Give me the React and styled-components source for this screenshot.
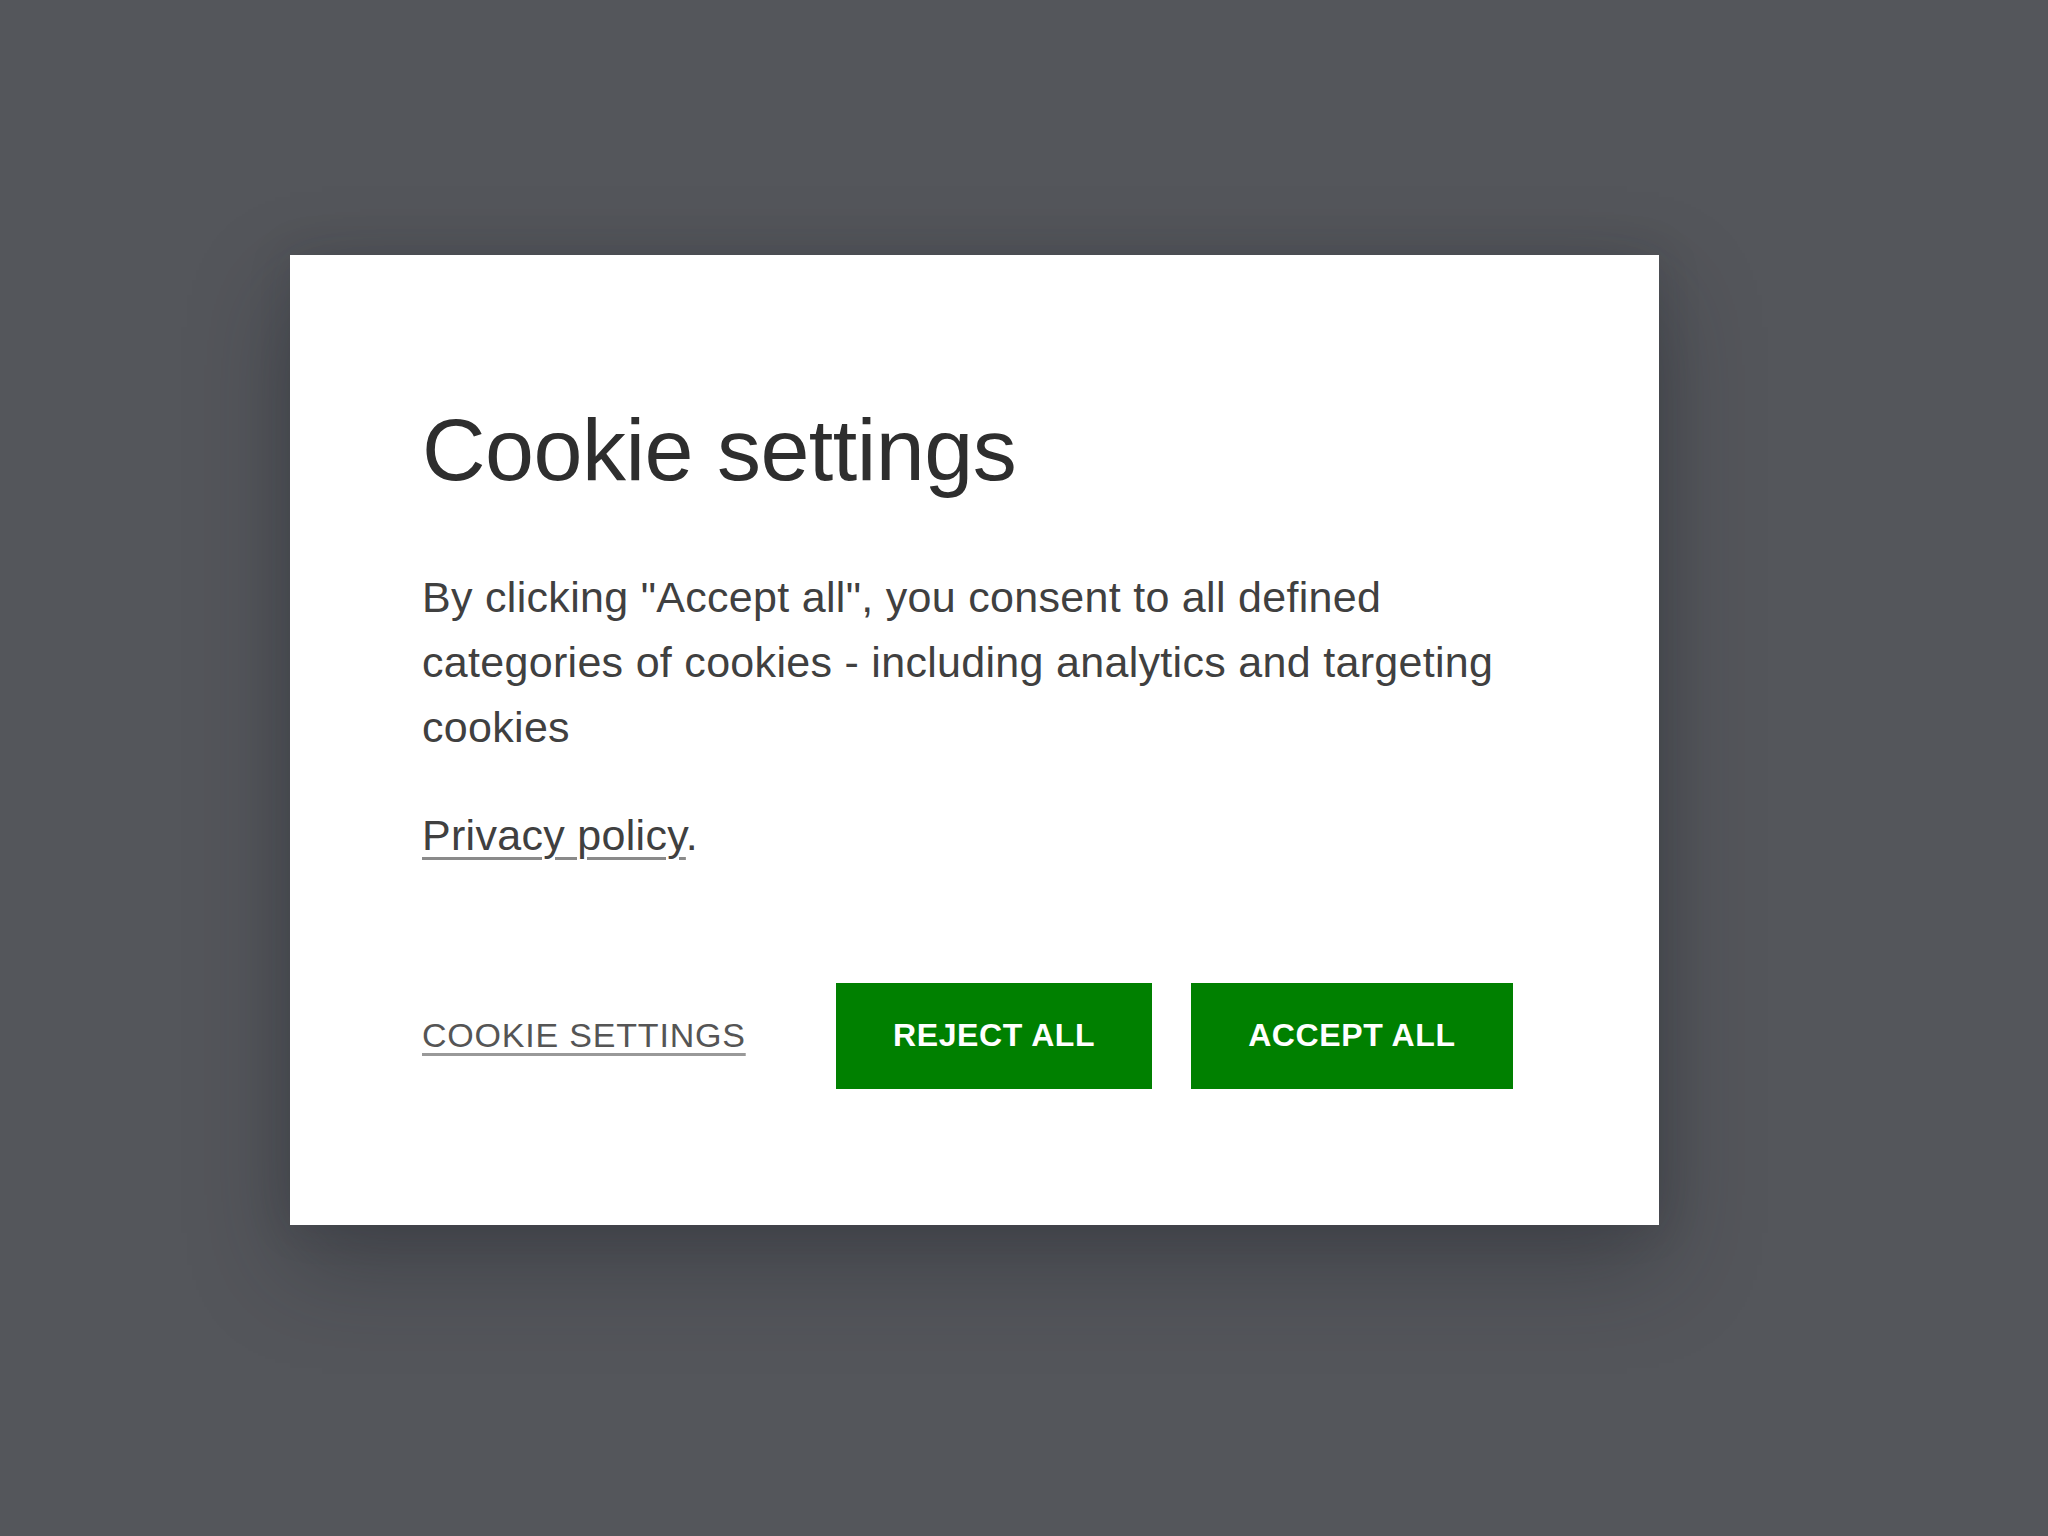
import React from "react";
import styled, { createGlobalStyle } from "styled-components";

const GlobalStyle = createGlobalStyle`
  html, body {
    margin: 0;
    padding: 0;
    background: #54565b;
    font-family: "Liberation Sans", Arial, sans-serif;
  }
`;

const App = () => {
  return (
    <>
      <GlobalStyle />
      <Overlay>
        <Dialog role="dialog" aria-labelledby="cookie-title">
          <Title id="cookie-title">Cookie settings</Title>
          <Text>
            By clicking "Accept all", you consent to all defined categories of
            cookies - including analytics and targeting cookies
          </Text>
          <Text spaced>
            <PolicyLink href="#">Privacy policy</PolicyLink>.
          </Text>
          <Actions>
            <SettingsLink href="#">Cookie settings</SettingsLink>
            <Buttons>
              <GreenButton>Reject all</GreenButton>
              <GreenButton>Accept all</GreenButton>
            </Buttons>
          </Actions>
        </Dialog>
      </Overlay>
    </>
  );
};

export default App;

// Styled components

const Overlay = styled.div`
  box-sizing: border-box;
  width: 2048px;
  height: 1536px;
  padding: 255px 0 0 290px;
  background: #54565b;
`;

const Dialog = styled.div`
  box-sizing: border-box;
  width: 1369px;
  height: 970px;
  padding: 142px 132px 0 132px;
  background: #ffffff;
  box-shadow: 0 40px 90px rgba(30, 32, 40, 0.35), 0 0 40px rgba(30, 32, 40, 0.15);
`;

const Title = styled.h1`
  margin: 0 0 62px 0;
  font-size: 88px;
  line-height: 1.2;
  font-weight: 400;
  color: #2e2e2e;
  letter-spacing: -0.5px;
`;

const Text = styled.p`
  margin: ${(props) => (props.spaced ? "43px 0 0 0" : "0")};
  max-width: 1105px;
  font-size: 43px;
  line-height: 65px;
  letter-spacing: 0.3px;
  color: #404040;
`;

const PolicyLink = styled.a`
  color: #404040;
  text-decoration: underline;
  text-underline-offset: 7px;
  text-decoration-thickness: 3px;
  text-decoration-color: #8a8a8a;
`;

const Actions = styled.div`
  display: flex;
  align-items: center;
  margin-top: 115px;
`;

const SettingsLink = styled.a`
  width: 414px;
  font-size: 34px;
  letter-spacing: 0.8px;
  text-transform: uppercase;
  color: #555555;
  text-decoration: underline;
  text-underline-offset: 6px;
  text-decoration-thickness: 3px;
  text-decoration-color: #999999;
`;

const Buttons = styled.div`
  display: flex;
  gap: 39px;
`;

const GreenButton = styled.button`
  height: 106px;
  padding: 0 57px;
  border: none;
  border-radius: 0;
  background: #008000;
  color: #ffffff;
  font-family: "Liberation Sans", Arial, sans-serif;
  font-size: 32px;
  font-weight: 700;
  letter-spacing: 0.6px;
  text-transform: uppercase;
  cursor: pointer;
`;
